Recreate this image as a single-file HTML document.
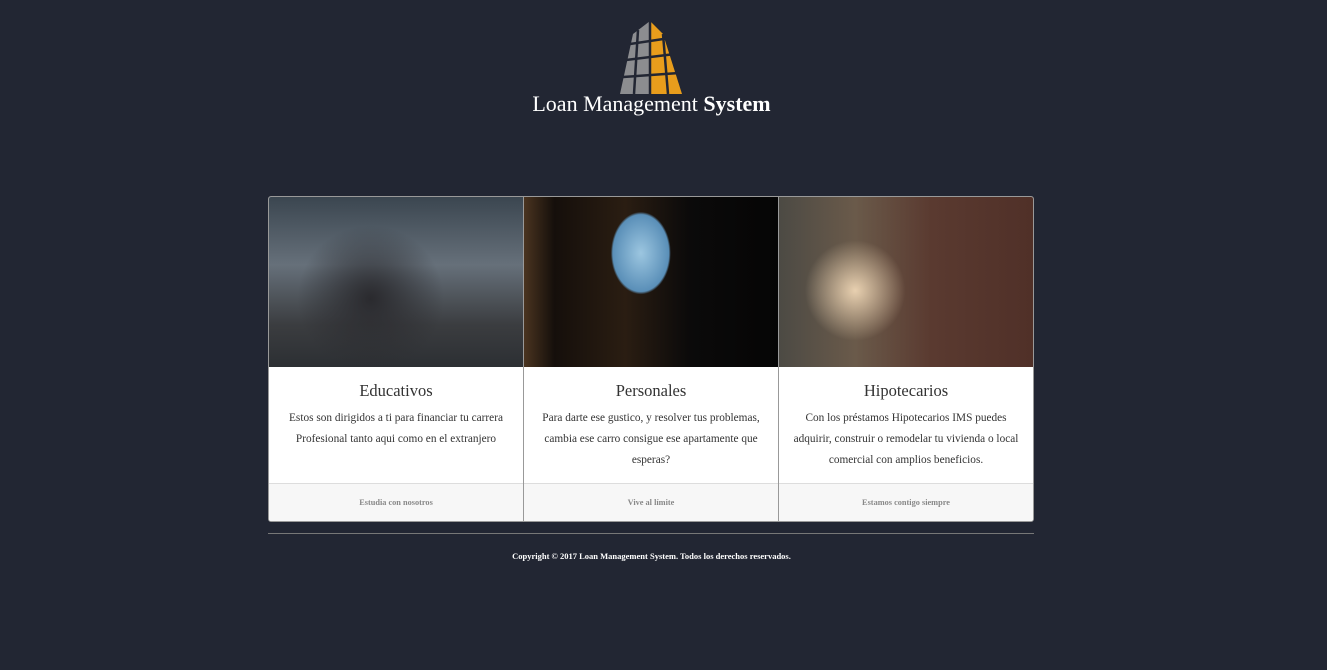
<!DOCTYPE html>
<html><head><meta charset="utf-8"><style>
body{margin:0;background:#222633;width:1327px;height:670px;overflow:hidden;font-family:"Liberation Serif",serif}
.logo{position:absolute;left:620px;top:20px}
.brand{position:absolute;left:0;width:1303px;text-align:center;top:91px;color:#fff;font-size:22px}
.deck{position:absolute;left:268px;top:196px;width:766px;height:326px;border:1px solid #999;box-sizing:border-box;display:flex;background:#fff;border-radius:3px;overflow:hidden}
.card{flex:1;display:flex;flex-direction:column;border-right:1px solid #999}
.card:last-child{border-right:none}
.img{height:170px}
.body{height:116px;text-align:center;color:#333}
.body h3{font-weight:normal;font-size:16.5px;margin:14px 0 7px}
.body p{font-size:11.3px;line-height:21px;margin:0 14px}
.ft{flex:1;background:#f7f7f7;border-top:1px solid #ddd;text-align:center;font-size:8.3px;color:#888;line-height:37px;font-weight:bold}
.hr{position:absolute;left:268px;top:533px;width:766px;height:1px;background:#777}
.copy{position:absolute;top:551px;width:1303px;text-align:center;color:#fff;font-size:8.5px;font-weight:bold;left:0}
</style></head><body>
<svg class="logo" width="64" height="75" viewBox="0 0 64 75">
<polygon points="13,14 30,1 30,74 0,74" fill="#8c8d90"/>
<polygon points="30,1 43,14 62,74 30,74" fill="#e89d1c"/>
<g stroke="#222633" stroke-width="2.5" fill="none">
<line x1="30" y1="1" x2="30" y2="74"/>
<line x1="18" y1="10" x2="14" y2="74"/><line x1="43" y1="14" x2="48" y2="74"/>
<line x1="6" y1="40" x2="55" y2="34"/><line x1="3" y1="57" x2="59" y2="53"/><line x1="10" y1="24" x2="50" y2="18"/>
</g></svg>
<div class="brand">Loan Management <b>System</b></div>
<div class="deck">
<div class="card"><div class="img" style="background:radial-gradient(circle at 40% 60%,#2a2a2e 0,transparent 40%),linear-gradient(180deg,#3b4650 0,#66707a 40%,#3b3d40 75%,#2c2f33 100%)"></div>
<div class="body"><h3>Educativos</h3><p>Estos son dirigidos a ti para financiar tu carrera Profesional tanto aqui como en el extranjero</p></div><div class="ft">Estudia con nosotros</div></div>
<div class="card"><div class="img" style="background:radial-gradient(ellipse 40px 55px at 46% 33%,#9cc6e0 0,#5a8fb8 70%,transparent 75%),linear-gradient(90deg,#4a3420 0,#150f0b 12%,#2a1d12 40%,#0b0a0a 65%,#050505 100%)"></div>
<div class="body"><h3>Personales</h3><p>Para darte ese gustico, y resolver tus problemas, cambia ese carro consigue ese apartamente que esperas?</p></div><div class="ft">Vive al límite</div></div>
<div class="card"><div class="img" style="background:radial-gradient(circle at 30% 55%,#e8d0b0 0,transparent 25%),linear-gradient(90deg,#4c4a44 0,#6a5a4a 30%,#5a3a30 60%,#503028 100%)"></div>
<div class="body"><h3>Hipotecarios</h3><p>Con los préstamos Hipotecarios IMS puedes adquirir, construir o remodelar tu vivienda o local comercial con amplios beneficios.</p></div><div class="ft">Estamos contigo siempre</div></div>
</div>
<div class="hr"></div>
<div class="copy">Copyright © 2017 Loan Management System. Todos los derechos reservados.</div>
</body></html>
